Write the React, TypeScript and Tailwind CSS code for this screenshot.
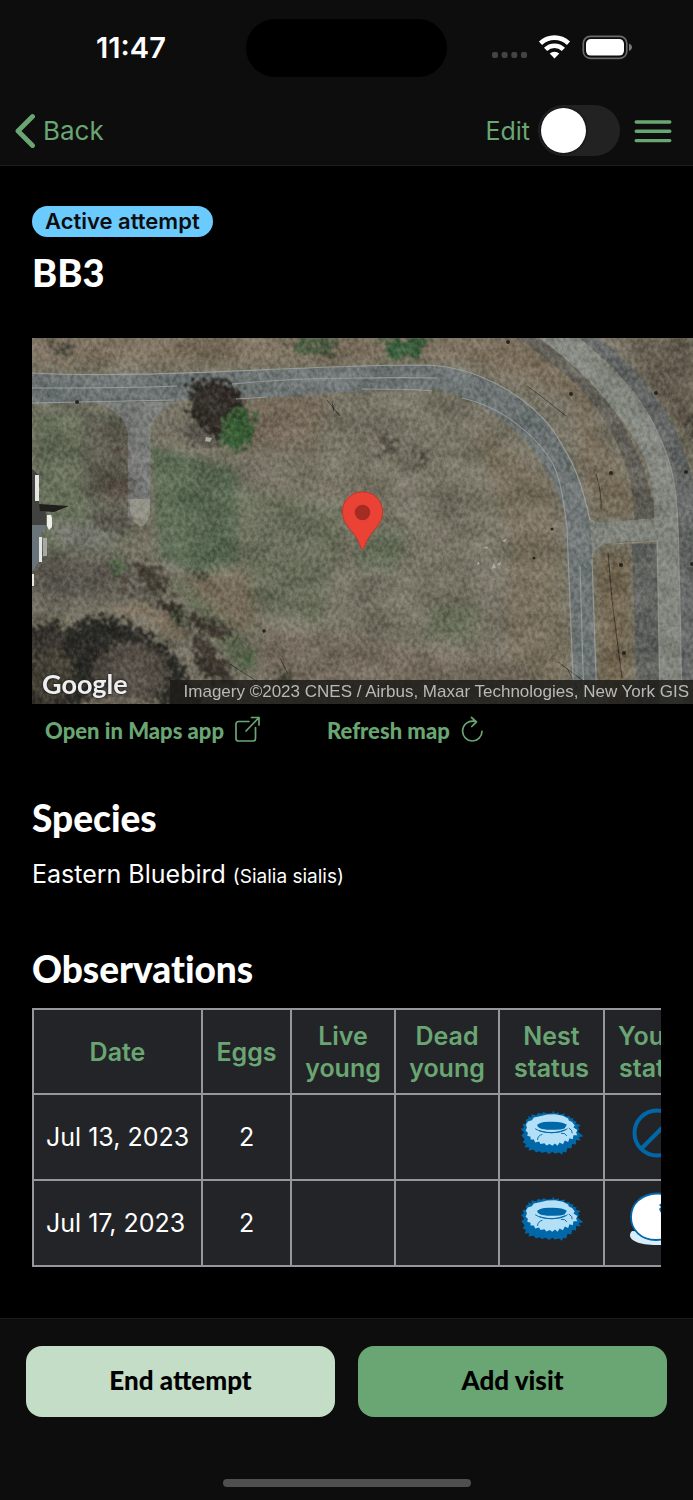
import { useState } from "react";

type Observation = {
  date: string;
  eggs: number;
  nest: string;
  young: "none" | "hatched";
};

const observations: Observation[] = [
  { date: "Jul 13, 2023", eggs: 2, nest: "Complete nest", young: "none" },
  { date: "Jul 17, 2023", eggs: 2, nest: "Complete nest", young: "hatched" },
];

function StatusBar() {
  return (
    <div className="grid h-24 grid-cols-[1fr_201px_1fr] items-center">
      <time className="pl-4 text-center text-[29px] leading-8 font-semibold text-white">11:47</time>
      <div className="h-[58px] rounded-full bg-black" />
      <div className="flex items-center justify-end pr-[60px]">
        <svg width="142" height="26" viewBox="0 0 142 26" aria-label="Signal, Wi-Fi and battery">
          <g fill="#444444">
            <rect x="1" y="17" width="6" height="6" rx="2" />
            <rect x="10.600" y="17" width="6" height="6" rx="2" />
            <rect x="20.300" y="17" width="6" height="6" rx="2" />
            <rect x="30" y="17" width="6" height="6" rx="2" />
          </g>
          <g fill="none" stroke="#ffffff" strokeWidth="4.600">
            <path d="M49.500 8.200a20.500 20.500 0 0 1 28 0" />
            <path d="M54.600 14.400a12.800 12.800 0 0 1 17.800 0" />
          </g>
          <path d="M58.700 18.600a7.200 7.200 0 0 1 9.600 0l-4.800 4.900z" fill="#ffffff" />
          <rect x="92.300" y="1.300" width="43.500" height="22" rx="7" fill="none" stroke="#6b6b6b" strokeWidth="1.700" />
          <rect x="95" y="4" width="38" height="16.600" rx="4.800" fill="#ffffff" />
          <path d="M138 8.500v7.400c2-.8 2.900-2 2.900-3.700s-.9-2.900-2.900-3.700z" fill="#7a7a7a" />
        </svg>
      </div>
    </div>
  );
}

function NavBar() {
  const [editing, setEditing] = useState(false);
  return (
    <nav className="flex h-[69px] items-center justify-between pr-[21px] pl-[15px]">
      <a href="#back" className="flex items-center gap-2 text-[26px] leading-8 text-[#6aa673]">
        <svg width="20" height="36" viewBox="0 0 20 36" fill="none" stroke="currentColor" strokeWidth="4.800" strokeLinecap="round" strokeLinejoin="round" aria-hidden="true">
          <path d="M17.500 3.500 3 18l14.500 14.500" />
        </svg>
        Back
      </a>
      <div className="flex items-center">
        <label htmlFor="edit" className="mr-2 text-[25px] leading-8 text-[#6aa673]">Edit</label>
        <input
          id="edit"
          type="checkbox"
          role="switch"
          checked={editing}
          onChange={(event) => setEditing(event.target.checked)}
          className="mr-3.5 flex h-[51px] w-[82px] appearance-none items-center rounded-full bg-[#222222] px-[3px] before:size-[45px] before:rounded-full before:bg-white before:shadow-[0_0_2px_1px_#00000080] checked:justify-end checked:bg-[#6aa673]"
        />
        <button type="button" aria-label="Menu" className="text-[#6aa673]">
          <svg width="38" height="24" viewBox="0 0 38 24" stroke="currentColor" strokeWidth="3.400" strokeLinecap="round">
            <path d="M2.200 3h33.600M2.200 12.300h33.600M2.200 21.600h33.600" />
          </svg>
        </button>
      </div>
    </nav>
  );
}

function AerialPhoto() {
  return (
    <svg className="block h-full w-full" viewBox="0 0 661 366" preserveAspectRatio="xMidYMid slice" role="img" aria-label="Satellite map of the nest location">
      <defs>
        <filter id="grain" x="0" y="0" width="100%" height="100%" colorInterpolationFilters="sRGB">
          <feTurbulence type="fractalNoise" baseFrequency="0.260 0.200" numOctaves="3" seed="7" />
          <feColorMatrix values="2 0 0 0 -0.500  2 0 0 0 -0.500  2 0 0 0 -0.500  0 0 0 0 1" />
        </filter>
        <filter id="patches" x="0" y="0" width="100%" height="100%" colorInterpolationFilters="sRGB">
          <feTurbulence type="fractalNoise" baseFrequency="0.025 0.040" numOctaves="4" seed="12" />
          <feColorMatrix values="1.600 0 0 0 -0.300  1.500 0.100 0 0 -0.300  1.500 0 0 0 -0.280  0 0 0 0 1" />
        </filter>
        <filter id="rough" x="-20%" y="-20%" width="140%" height="140%">
          <feTurbulence type="fractalNoise" baseFrequency="0.180" numOctaves="4" seed="3" />
          <feDisplacementMap in="SourceGraphic" scale="30" xChannelSelector="R" yChannelSelector="G" />
          <feGaussianBlur stdDeviation="0.800" />
        </filter>
        <filter id="soft" x="-20%" y="-20%" width="140%" height="140%">
          <feGaussianBlur stdDeviation="6" />
        </filter>
        <filter id="edge" x="-5%" y="-5%" width="110%" height="110%">
          <feGaussianBlur stdDeviation="0.700" />
        </filter>
      </defs>

      <rect width="661" height="366" fill="#777365" />
      <g filter="url(#soft)">
        <path d="M0 0H500L560 60V180L540 60L430 20L0 26z" fill="#7d705e" />
        <path d="M0 72H95V200L60 225L0 230z" fill="#666e5a" />
        <path d="M50 75L95 80V185L50 160z" fill="#5b5a50" />
        <path d="M20 185H95L75 210L30 210z" fill="#77786f" />
        <path d="M205 60L300 58L280 110L210 110z" fill="#766b5c" />
        <path d="M205 150L320 170L290 290L220 270z" fill="#6b6e5b" />
        <path d="M150 230L215 235L225 290L190 290z" fill="#776d5c" />
        <path d="M0 215L90 215L130 260L0 270z" fill="#625d55" />
        <path d="M130 225L200 290L230 330L205 335z" fill="#5b6650" />
        <path d="M330 185L375 190L365 235L320 230z" fill="#68705c" />
        <path d="M395 270L450 265L440 305L390 300z" fill="#6b6f5c" />
        <path d="M440 80L520 150L535 366H470L480 200z" fill="#7a7161" />
        <path d="M560 90L600 150L605 180L565 175z" fill="#736956" />
        <path d="M566 215H598V366H570z" fill="#726651" />
        <path d="M590 0H661V110L620 50z" fill="#625a4e" />
        <path d="M230 290L400 310L500 330V366H220z" fill="#746c5e" />
      </g>

      <path d="M120 108L150 116L190 128L206 133L208 225L165 237L128 220z" fill="#5a6a53" filter="url(#soft)" />
      <path d="M121 112L150 118L190 130L205 136L206 222L165 234L130 218z" fill="#5b6a54" opacity="0.500" filter="url(#edge)" />

      <g filter="url(#edge)">
        <path d="M487 0H510C560 36 608 92 622 170L625 182H602C604 130 575 70 530 34z" fill="#5f5d57" opacity="0.850" />
        <path d="M547 0H566C625 42 654 105 661 145V366H649L646 184C640 100 600 38 547 0z" fill="#666967" />
        <path d="M600 206H625L628 366H605z" fill="#60625e" />
        <path d="M507 0H547C583 30 602 50 617 77C630 102 640 125 643 150C647 175 646 200 648 260L650 366H628L625 203C600 202 586 204 572 206Q563 210 560 221L558 181Q566 186 580 184L622 180C623 150 618 132 610 114C598 92 590 82 583 74C562 45 535 20 507 0z" fill="#82867f" />
        <path d="M0 35C100 40 200 32 330 28C350 27 375 27 397 27C420 28 445 36 463 45C500 64 520 88 530 107C545 130 552 155 558 182L560 224L565 366H542L540 297L533 184C531 160 522 145 507 120C492 98 478 87 468 81C445 62 420 54 397 51C360 51 300 55 240 59C150 62 80 66 0 66z" fill="#6e7475" />
        <path d="M62 64H150C132 68 121 76 119 92L118 174C116 182 108 186 96 180V94C92 78 80 69 62 64z" fill="#7b7e7c" />
        <path d="M97 161H118V176Q116 186 109 189L99 182z" fill="#96958a" />
      </g>

      <g filter="url(#rough)">
        <path d="M12 302L60 276L104 288L146 318L172 372H12z" fill="#2c2a25" />
        <path d="M-10 292L30 282L40 376H-10z" fill="#312e29" />
        <ellipse cx="98" cy="334" rx="38" ry="30" fill="#4f4a42" />
        <ellipse cx="20" cy="338" rx="22" ry="26" fill="#474239" />
        <ellipse cx="88" cy="368" rx="42" ry="12" fill="#655f52" />
        <path d="M158 42L204 44L212 74L198 96L182 104L158 76z" fill="#2b2621" />
        <path d="M198 76L219 68L222 96L212 114L188 108z" fill="#3b6137" />
        <path d="M150 86L174 90L182 112L154 106z" fill="#5b564f" />
        <path d="M256 2H306L298 16L273 18z" fill="#44573d" />
        <path d="M350 0H398L386 18L358 22z" fill="#3b5f3e" />
        <path d="M18 6H42L38 22L22 20z" fill="#4f4e42" />
        <path d="M70 100L92 113L98 128L80 118zM60 148L98 136L96 164L72 156z" fill="#524c43" />
        <path d="M100 226L130 230L140 256L116 252zM81 236L100 240L95 258z" fill="#403a32" />
        <path d="M126 260L150 268L154 286L132 282zM153 290L182 306L206 348L172 340zM156 274L200 288L194 302L168 294z" fill="#3a352e" />
        <path d="M160 233L170 236L172 244L162 242zM244 330L264 342L258 348L248 346z" fill="#4b4a3e" />
        <path d="M346 94L366 110L364 118L352 114zM382 106L398 118L396 124L386 122z" fill="#4f4b42" />
        <path d="M655 76L675 82V106L658 98z" fill="#4a443c" />
        <path d="M142 273L151 280L148 287zM80 220L94 216L92 234L80 236zM213 318L222 314L217 332z" fill="#4f6746" />
        <path d="M68 270L118 266L158 298L148 302L116 282L72 272z" fill="#7c705f" />
        <path d="M20 238L60 236L78 252L40 258L16 254zM60 170L100 182L96 196L66 190z" fill="#58544e" />
      </g>

      <g fill="none" stroke="#302e29" strokeWidth="1">
        <path d="M295 62L308 78M300 64L302 74M564 136Q570 155 569 172M576 215L580 262L590 340M495 48L514 62L534 78M526 324L550 342L568 360M535 330L545 350M198 326L226 344M248 320L256 336" opacity="0.800" />
      </g>

      <rect width="661" height="366" filter="url(#patches)" opacity="0.250" style={{ mixBlendMode: "soft-light" }} />
      <rect width="661" height="366" filter="url(#grain)" opacity="0.280" style={{ mixBlendMode: "soft-light" }} />

      <g fill="none" stroke="#a3a8a3" strokeWidth="1.200">
        <path d="M0 35C100 40 200 32 330 28C350 27 375 27 397 27C420 28 445 36 463 45C500 64 520 88 530 107C545 130 552 155 558 182" opacity="0.800" />
        <path d="M0 50C60 50 100 50 145 48M200 46C240 42 290 40 330 40C345 40 365 39 405 40M0 65C60 64 100 63 142 62M204 61 235 59M330 51C360 51 385 51 400 53" opacity="0.800" />
        <path d="M430 60C475 70 508 103 521 126C530 145 532 168 535 190L542 366M560 221L565 366M548 228L552 366" opacity="0.700" />
        <path d="M617 77C630 102 640 125 643 150C647 175 646 200 648 260L650 366M582 206L625 203L628 366" opacity="0.500" />
      </g>
      <g fill="#252420">
        <circle cx="476" cy="4" r="2" /><circle cx="539" cy="56" r="2" /><circle cx="624" cy="55" r="2" />
        <circle cx="579" cy="135" r="2" /><circle cx="654" cy="134" r="2" /><circle cx="589" cy="227" r="2" />
        <circle cx="592" cy="315" r="2" /><circle cx="520" cy="191" r="1.500" /><circle cx="502" cy="220" r="1.500" />
        <circle cx="45" cy="64" r="2" /><circle cx="232" cy="293" r="1.800" /><circle cx="660" cy="226" r="2" />
      </g>
      <g fill="#a9ada8">
        <path d="M452 210l3-2 1 3zM470 203l5-3-2 4zM459 231l3-6 2 5zM465 226l4-2-1 4zM446 223l2 3-3 1zM174 99l6 1-2 4-5-1z" />
      </g>

      <path d="M0 131L7 137V168L14 175V188L0 187z" fill="#40423f" />
      <path d="M0 187H14L8 198V222L0 234z" fill="#68747a" />
      <path d="M3 137h4v26H3zM7 199h3v25H7zM0 236h2v12H0z" fill="#e5e7e4" />
      <path d="M7 166L37 168L22 174L8 173z" fill="#1f1f1b" />
      <path d="M15 177h4l1 3v9l-3 3-2-4z" fill="#eeeeea" />
      <path d="M11 200h4v18h-4z" fill="#a7a8a3" />

      <path d="M330.500 154C319 154 310.500 162.500 310.500 174C310.500 188 322 191 328 207Q329 211 330.500 211Q332 211 333 207C339 191 350.500 188 350.500 174C350.500 162.500 342 154 330.500 154z" fill="#ea4335" stroke="#c5362a" strokeWidth="1" />
      <circle cx="330.500" cy="174.500" r="7.800" fill="#a52c22" />
    </svg>
  );
}

function MapPanel() {
  return (
    <section className="pl-8">
      <div className="relative h-[366px] overflow-hidden">
        <AerialPhoto />
        <span className="absolute bottom-1 left-2.5 font-[Lato] text-[27px] leading-8 font-bold text-[#efefef] [text-shadow:0_0_3px_#222,0_0_2px_#222]">
          Google
        </span>
        <span className="absolute right-0 bottom-0 bg-[#1d1c19]/85 pr-1 pl-3.5 font-['Liberation_Sans'] text-[17px] leading-6 whitespace-nowrap text-[#b9b9b7]">
          Imagery ©2023 CNES / Airbus, Maxar Technologies, New York GIS
        </span>
      </div>
      <div className="flex h-[54px] items-center gap-[66px] pl-[13px] font-[Lato] text-[22px] leading-7 font-black text-[#6aa673]">
        <a href="#maps" className="flex items-center gap-2.5">
          Open in Maps app
          <svg className="mb-1" width="27" height="27" viewBox="0 0 27 27" fill="none" stroke="currentColor" strokeWidth="1.700" strokeLinecap="round" strokeLinejoin="round" aria-hidden="true">
            <path d="M15 5.500H4.500a2.500 2.500 0 0 0-2.500 2.500v14.500A2.500 2.500 0 0 0 4.500 25h14.500a2.500 2.500 0 0 0 2.500-2.500V11.500M17.500 1.500h7.500v7.500M25 1.500 12 15" />
          </svg>
        </a>
        <button type="button" className="flex items-center gap-2.5">
          Refresh map
          <svg className="mb-1" width="25" height="27" viewBox="0 0 25 27" fill="none" stroke="currentColor" strokeWidth="1.700" strokeLinecap="round" strokeLinejoin="round" aria-hidden="true">
            <path d="M16.500 5.800C8.500 3.500 2.600 8.500 2.600 15.300a9.700 9.700 0 0 0 19.400 0M11.500 1.500l5 4.300-4.700 4.700" />
          </svg>
        </button>
      </div>
    </section>
  );
}

function NestIcon({ label }: { label: string }) {
  return (
    <svg className="mx-auto block" width="64" height="46" viewBox="88 332 194 138" role="img" aria-label={label}>
      <path
        fill="#0067a9"
        d="M106 360L114 358L112 350L124 354L122 344L138 348L142 340L154 343L160 337L168 342L186 340L189 333L193 341L206 339L206 345L224 342L222 350L238 350L240 356L250 356L248 362L260 366L256 372L272 377L264 384L268 390L262 396L280 411L266 414L272 424L258 422L258 436L246 434L244 448L232 446L228 460L218 458L216 467L206 460L194 463L186 458L176 465L166 458L154 462L148 456L136 460L130 452L114 454L116 444L102 445L106 434L96 430L102 420L92 408L101 400L90 388L100 386L96 374L106 372z"
      />
      <path
        fill="#b3e0f6"
        d="M112 366L124 362L130 354L148 350L170 345L194 344L218 349L234 357L236 363L246 368L254 378L250 384L262 392L258 400L262 408L250 408L248 420L238 417L234 428L224 424L218 435L208 430L202 440L194 433L186 440L178 434L168 439L162 432L150 434L146 427L134 430L130 421L120 421L120 412L110 409L112 400L105 394L109 384L106 376z"
      />
      <path fill="#0067a9" d="M140 376Q152 366 182 367Q216 366 230 376L223 387Q208 393 180 391Q150 391 142 382z" />
      <path fill="none" stroke="#0067a9" strokeWidth="2.800" d="M134 388Q150 399 184 400Q216 400 232 388M146 394Q184 408 226 391M141 422Q142 408 156 405M212 402Q226 400 230 410M236 386Q248 392 246 402" />
    </svg>
  );
}

function NoYoungIcon() {
  return (
    <svg className="block" width="52" height="52" viewBox="0 0 52 52" fill="none" stroke="#0067a9" strokeWidth="4" role="img" aria-label="No young">
      <circle cx="26" cy="26" r="22.500" />
      <path d="M10 42 42 10" />
    </svg>
  );
}

function HatchlingIcon() {
  return (
    <svg className="block" width="56" height="54" viewBox="0 0 56 54" role="img" aria-label="Hatched young">
      <path d="M3 39C-3 45 4 53 28 53S56 49 55 42z" fill="#d9eefa" />
      <path d="M28 1.500C12 2 2 12 2 25S12 48 27 48 54 38 54 25 44 1 28 1.500z" fill="#ffffff" stroke="#0067a9" strokeWidth="1.800" />
      <path d="M34 10l-4 3 2 2-2 2 2 4 4-2z" fill="#0067a9" />
    </svg>
  );
}

function ObservationsTable() {
  const head = "border-2 border-[#96969c] p-0 font-semibold text-[#6aa673]";
  const cell = "border-2 border-[#96969c] p-0";
  return (
    <div className="overflow-x-auto [scrollbar-width:none]">
      <table className="w-[676px] table-fixed border-collapse bg-[#232427] text-center text-[25px] leading-8 text-white">
        <colgroup>
          <col className="w-[169px]" />
          <col className="w-[89px]" />
          <col className="w-[104px]" />
          <col className="w-[104px]" />
          <col className="w-[105px]" />
          <col className="w-[105px]" />
        </colgroup>
        <thead>
          <tr className="h-[85px]">
            <th scope="col" className={head}>Date</th>
            <th scope="col" className={head}>Eggs</th>
            <th scope="col" className={head}>Live young</th>
            <th scope="col" className={head}>Dead young</th>
            <th scope="col" className={head}>Nest status</th>
            <th scope="col" className={head}>Young status</th>
          </tr>
        </thead>
        <tbody>
          {observations.map((row) => (
            <tr key={row.date} className="h-[86px]">
              <td className="border-2 border-[#96969c] p-0 pl-3 text-left">{row.date}</td>
              <td className={cell}>{row.eggs}</td>
              <td className={cell} />
              <td className={cell} />
              <td className="border-2 border-[#96969c] p-0 pb-2"><NestIcon label={row.nest} /></td>
              <td className="border-2 border-[#96969c] p-0 pb-2">
                <div className="flex justify-center">
                  {row.young === "none" ? <NoYoungIcon /> : <HatchlingIcon />}
                </div>
              </td>
            </tr>
          ))}
        </tbody>
      </table>
    </div>
  );
}

export default function App() {
  return (
    <div className="flex min-h-screen flex-col bg-black font-[Inter,sans-serif] text-white">
      <header className="border-b border-[#1c1c1c] bg-[#0d0d0d]">
        <StatusBar />
        <NavBar />
      </header>

      <main className="flex-1 pt-10 pb-12">
        <div className="flex flex-col items-start gap-[15px] px-8 pb-[46px]">
          <span className="rounded-full bg-[#6bcbff] px-[13px] text-[22px] leading-[31px] font-semibold text-[#0d0d0d] [font-variant-ligatures:none]">
            Active attempt
          </span>
          <h1 className="font-[Lato] text-[38px] leading-10 font-black">BB3</h1>
        </div>

        <MapPanel />

        <section className="px-8 pt-[38px]">
          <h2 className="font-[Lato] text-[37px] leading-11 font-black">Species</h2>
          <p className="pt-4 text-[25px] leading-9">
            Eastern Bluebird <small className="text-[19px]">(Sialia sialis)</small>
          </p>
        </section>

        <section className="flex flex-col gap-[17px] px-8 pt-[52px]">
          <h2 className="font-[Lato] text-[37px] leading-11 font-black [font-variant-ligatures:none]">Observations</h2>
          <ObservationsTable />
        </section>
      </main>

      <footer className="flex flex-col items-center border-t border-[#1c1c1c] bg-[#0d0d0d] px-[26px] pt-[27px] pb-[13px]">
        <div className="grid w-full grid-cols-2 gap-[23px] font-[Lato] text-[26px] leading-8 font-black text-black">
          <button type="button" className="h-[71px] rounded-2xl bg-[#c3ddc6] pb-1">End attempt</button>
          <button type="button" className="h-[71px] rounded-2xl bg-[#6aa673] pb-1">Add visit</button>
        </div>
        <div className="mt-[62px] h-2 w-[248px] rounded-full bg-[#4f4f4f]" />
      </footer>
    </div>
  );
}
